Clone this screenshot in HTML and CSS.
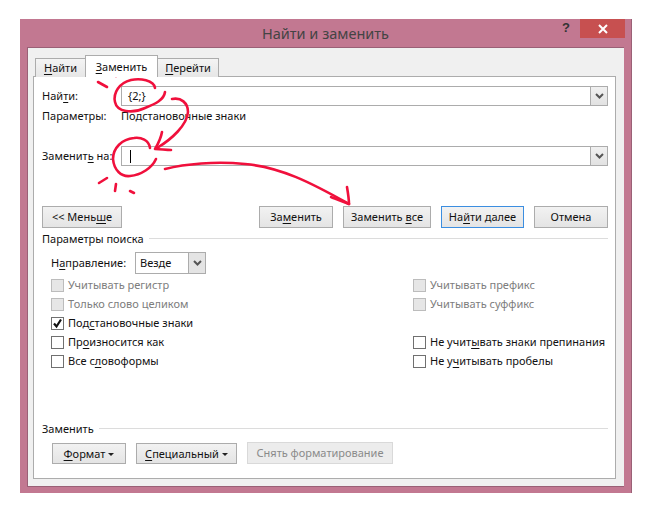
FILE: index.html
```html
<!DOCTYPE html>
<html lang="ru">
<head>
<meta charset="utf-8">
<title>Найти и заменить</title>
<link rel="stylesheet" href="styles.css">
</head>
<body>
<div class="window">
  <div class="titlebar">
    <span class="title">Найти и заменить</span>
    <span class="help">?</span>
    <span class="close"><svg width="10" height="10" viewBox="0 0 10 10"><path d="M1 1L9 9M9 1L1 9" stroke="#fff" stroke-width="2"/></svg></span>
  </div>
  <div class="client">
    <div class="tabs">
      <div class="tab"><u>Н</u>айти</div>
      <div class="tab active"><u>З</u>аменить</div>
      <div class="tab"><u>П</u>ерейти</div>
    </div>
    <div class="pane">
      <div class="field-row first">
        <span class="field-label up">Най<u>т</u>и:</span>
        <div class="combo"><span class="combo-text up">{2;}</span><span class="combo-btn"><svg class="chev" width="9" height="6" viewBox="0 0 9 6"><path d="M1 1L4.500 4.500L8 1" fill="none" stroke="#555" stroke-width="2"/></svg></span></div>
      </div>
      <div class="params-row">
        <span class="field-label">Параметры:</span>
        <span>Подстановочные знаки</span>
      </div>
      <div class="field-row second">
        <span class="field-label up">Заменит<u>ь</u> на:</span>
        <div class="combo"><span class="caret"></span><span class="combo-btn"><svg class="chev" width="9" height="6" viewBox="0 0 9 6"><path d="M1 1L4.500 4.500L8 1" fill="none" stroke="#555" stroke-width="2"/></svg></span></div>
      </div>
      <div class="action-row">
        <button class="btn less">&lt;&lt; Мень<u>ш</u>е</button>
        <span class="spacer"></span>
        <button class="btn replace">За<u>м</u>енить</button>
        <button class="btn replace-all">Заменить <u>в</u>се</button>
        <button class="btn next">На<u>й</u>ти далее</button>
        <button class="btn cancel">Отмена</button>
      </div>
      <div class="group-head"><span class="up">Параметры поиска</span><i></i></div>
      <div class="direction">
        <span class="dir-label up">Н<u>а</u>правление:</span>
        <div class="select"><span class="select-text up">Везде</span><span class="select-btn"><svg width="9" height="6" viewBox="0 0 9 6"><path d="M1 1L4.500 4.500L8 1" fill="none" stroke="#555" stroke-width="2"/></svg></span></div>
      </div>
      <div class="checks">
        <label class="check off"><span class="box"></span><span class="up">Учитывать регистр</span></label>
        <label class="check off"><span class="box"></span><span class="up">Учитывать префикс</span></label>
        <label class="check off"><span class="box"></span><span class="up">Только слово целиком</span></label>
        <label class="check off"><span class="box"></span><span class="up">Учитывать суффикс</span></label>
        <label class="check"><span class="box"><svg width="11" height="11" viewBox="0 0 11 11"><path d="M2 5.500L4.500 8.500L9 1.500" fill="none" stroke="#111" stroke-width="2.200"/></svg></span><span class="up">Под<u>с</u>тановочные знаки</span></label>
        <span></span>
        <label class="check"><span class="box"></span><span class="up">Пр<u>о</u>износится как</span></label>
        <label class="check"><span class="box"></span><span class="up">Не учит<u>ы</u>вать знаки препинания</span></label>
        <label class="check"><span class="box"></span><span class="up">Все с<u>л</u>овоформы</span></label>
        <label class="check"><span class="box"></span><span class="up">Не у<u>ч</u>итывать пробелы</span></label>
      </div>
      <div class="group-head bottom"><span class="up">Заменить</span><i></i></div>
      <div class="format-row">
        <button class="btn format"><u>Ф</u>ормат<b class="tri"></b></button>
        <button class="btn special"><u>С</u>пециальный<b class="tri"></b></button>
        <button class="btn clear" disabled>Снять форматирование</button>
      </div>
    </div>
  </div>
</div>
<svg class="ink" width="648" height="517" viewBox="0 0 648 517">
  <g fill="none" stroke="#f0103c" stroke-width="2.600" stroke-linecap="round" stroke-linejoin="round">
    <path d="M155 88C154 80 140 78 131 80C119 83 113 93 115 102C117 112 132 114 145 108C155 104 164 100 165 92"/>
    <path d="M172 99C181 97 188 103 188 112C187 125 172 139 157 148"/>
    <path d="M162 132C161 138 158 144 155 149C160 149 166 150 171 150"/>
    <path d="M150 148C149 140 141 137 134 138C122 139 113 148 113 159C114 170 121 177 130 176C141 175 152 168 156 159"/>
    <path d="M165 169C185 164 215 161 245 164C280 167 310 182 349 204"/>
    <path d="M347 187C348 193 349 199 349 204C343 202 336 199 331 197"/>
    <path d="M112 72L116 76M126 64L128 71M98 82L107 87M99 183L107 178M116 184L115 191M130 191L134 193"/>
  </g>
</svg>
</body>
</html>
```
FILE: styles.css
```css
* { box-sizing: border-box; }
html, body { margin: 0; padding: 0; background: #fff; }
body {
  width: 648px;
  height: 517px;
  overflow: hidden;
  padding: 19px 0 0 20px;
  font: 11px/15px "Noto Sans", "Open Sans", sans-serif;
  color: #111;
}
u { text-underline-offset: 2px; }
.up { padding-bottom: 2px; }
.window {
  width: 612px;
  height: 474px;
  background: #c27891;
  border-right: 1px solid #9a6076;
  display: flex;
  flex-direction: column;
}
.titlebar {
  height: 28px;
  flex: none;
  display: flex;
  align-items: flex-start;
  position: relative;
}
.title {
  position: absolute;
  left: 0;
  width: 611px;
  top: 5px;
  text-align: center;
  font-size: 14.500px;
  line-height: 18px;
  color: #444;
}
.help {
  position: absolute;
  left: 542px;
  top: 1px;
  font: bold 13px/16px "Liberation Sans", sans-serif;
  color: #333;
}
.close {
  position: absolute;
  left: 560px;
  top: 0;
  width: 45px;
  height: 19px;
  background: #c75050;
  display: flex;
  align-items: center;
  justify-content: center;
}
.client {
  width: 597px;
  height: 440px;
  margin-left: 7px;
  background: #f0f0f0;
  border: 1px solid #9a6076;
  border-width: 1px 0 1px 1px;
  padding: 8px 0 0 5px;
  display: flex;
  flex-direction: column;
}
.tabs {
  display: flex;
  align-items: flex-end;
  height: 21px;
  padding-left: 2px;
  position: relative;
  z-index: 1;
  margin-bottom: -1px;
}
.tab {
  height: 19px;
  padding: 1px 0 0;
  width: 51px;
  text-align: center;
  background: linear-gradient(#f4f4f4, #e6e6e6);
  border: 1px solid #acacac;
  border-bottom: 0;
  margin-right: -1px;
  font-size: 11px;
}
.tab:last-child { width: 62px; }
.tab.active {
  width: 73px;
  height: 22px;
  background: #fff;
  padding-top: 3px;
  position: relative;
  z-index: 2;
}
.pane {
  width: 583px;
  height: 403px;
  background: #fff;
  border: 1px solid #acacac;
  padding: 9px 7px 0 8px;
}
.field-row { display: flex; align-items: center; height: 20px; }
.field-label { width: 79px; flex: none; }
.combo {
  flex: 1;
  height: 20px;
  border: 1px solid #acacac;
  background: #fff;
  display: flex;
  align-items: center;
  padding-left: 6px;
}
.combo-text { flex: 1; }
.caret { width: 1px; height: 13px; background: #000; margin-left: 2px; flex: none; margin-right: auto; }
.combo-btn {
  width: 17px;
  height: 18px;
  flex: none;
  background: linear-gradient(#f0f0f0, #e2e2e2);
  border-left: 1px solid #acacac;
  display: flex;
  align-items: center;
  justify-content: center;
}
.params-row { display: flex; align-items: center; height: 15px; margin-top: 2px; }
.field-row.second { margin-top: 23px; }
.action-row { display: flex; margin-top: 40px; gap: 10px; }
.spacer { flex: 1; }
.btn {
  height: 22px;
  padding: 0 0 1px;
  font: inherit;
  color: #111;
  background: linear-gradient(#f2f2f2, #e4e4e4);
  border: 1px solid #acacac;
  flex: none;
}
.less { width: 80px; }
.replace { width: 74px; }
.replace-all { width: 88px; }
.next { width: 83px; border-color: #3c8ee0; }
.cancel { width: 74px; }
.group-head { display: flex; align-items: center; gap: 5px; margin-top: 4px; height: 15px; }
.group-head i { flex: 1; height: 1px; background: #dcdcdc; margin-top: -2px; }
.direction { display: flex; align-items: center; height: 22px; margin: 5px 0 0 9px; }
.dir-label { width: 84px; }
.select {
  width: 71px;
  height: 22px;
  border: 1px solid #acacac;
  display: flex;
  align-items: center;
  padding-left: 4px;
}
.select-text { flex: 1; }
.select-btn {
  width: 17px;
  height: 20px;
  background: #e4e4e4;
  border-left: 1px solid #acacac;
  display: flex;
  align-items: center;
  justify-content: center;
}
.checks {
  display: grid;
  grid-template-columns: 362px 1fr;
  grid-auto-rows: 19px;
  margin: 2px 0 0 9px;
}
.check { display: flex; align-items: center; gap: 4px; white-space: nowrap; }
.box {
  width: 13px;
  height: 13px;
  flex: none;
  background: #fff;
  border: 1px solid #707070;
  display: flex;
  align-items: center;
  justify-content: center;
}
.check.off { color: #7d7d7d; }
.check.off .box { background: #e6e6e6; border-color: #bcbcbc; }
.group-head.bottom { margin-top: 51px; }
.format-row { display: flex; gap: 10px; margin: 5px 0 0 10px; align-items: flex-start; }
.format { width: 74px; height: 21px; margin-top: 1px; padding: 0; }
.special { width: 101px; height: 21px; margin-top: 1px; padding: 0; }
.clear { width: 146px; color: #8a8a8a; background: #ececec; border-color: #d9d9d9; }
.tri {
  display: inline-block;
  margin-left: 3px;
  vertical-align: 2px;
  border: 3px solid transparent;
  border-top-color: #222;
  border-bottom: 0;
}
.ink { position: absolute; left: 0; top: 0; pointer-events: none; }
```
